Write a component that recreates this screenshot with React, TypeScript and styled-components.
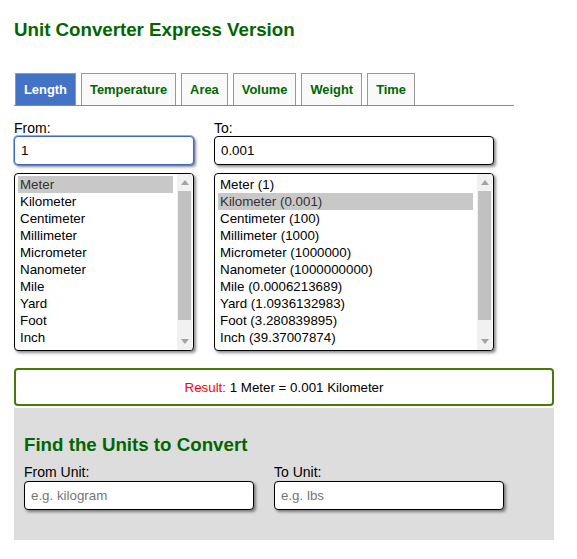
import React, { useState } from 'react';
import styled, { createGlobalStyle } from 'styled-components';

const GlobalStyle = createGlobalStyle`
  body {
    margin: 0;
    background: #fff;
    font-family: "Liberation Sans", Arial, sans-serif;
    color: #000;
  }
`;

const Page = styled.div`
  width: 540px;
  padding: 19px 0 0 14px;
`;

const Title = styled.h1`
  margin: 0;
  font-size: 18.72px;
  line-height: 22px;
  font-weight: bold;
  color: #006600;
`;

const TabBar = styled.div`
  display: flex;
  align-items: flex-end;
  gap: 5px;
  width: 499px;
  margin-top: 32px;
  padding-left: 1px;
  border-bottom: 1px solid #8a8a8a;
`;

const Tab = styled.button<{ $active?: boolean }>`
  box-sizing: border-box;
  height: 32px;
  padding: 0 8px;
  border: 1px solid #999;
  border-bottom: none;
  background: ${props => props.$active ? '#4472c4' : '#f9f9f9'};
  color: ${props => props.$active ? '#fff' : '#006600'};
  font-family: "Liberation Sans", Arial, sans-serif;
  font-size: 12.9px;
  font-weight: bold;
  cursor: pointer;
`;

const ConverterGrid = styled.div`
  display: grid;
  grid-template-columns: 180px 280px;
  column-gap: 20px;
  margin-top: 14px;
`;

const Column = styled.div`
  display: flex;
  flex-direction: column;
`;

const Label = styled.label`
  display: block;
  font-size: 14px;
  line-height: 16px;
  color: #000;
`;

const TextInput = styled.input`
  box-sizing: border-box;
  width: 100%;
  height: 29px;
  padding: 0 6px;
  border: 1px solid #000;
  border-radius: 4px;
  background: #fff;
  font-family: "Liberation Sans", Arial, sans-serif;
  font-size: 13.33px;
  color: #000;
  box-shadow: 2px 2px 3px rgba(0, 0, 0, 0.45);
  outline: none;

  &::placeholder {
    color: #767676;
  }

  &:focus {
    border-color: #3f68c0;
    box-shadow: 0 0 0 1px rgba(70, 110, 200, 0.55), 2px 2px 3px rgba(0, 0, 0, 0.45);
  }
`;

const ListBox = styled.div`
  box-sizing: border-box;
  display: flex;
  height: 178px;
  margin-top: 8px;
  border: 1px solid #000;
  border-radius: 4px;
  background: #fff;
  box-shadow: 2px 2px 3px rgba(0, 0, 0, 0.45);
  overflow: hidden;
`;

const Options = styled.div`
  flex: 1;
  padding: 2px 4px 0 3px;
  overflow: hidden;
`;

const Option = styled.div<{ $selected?: boolean }>`
  height: 17px;
  padding-left: 2px;
  font-size: 13.33px;
  line-height: 17px;
  white-space: nowrap;
  background: ${props => props.$selected ? '#c8c8c8' : 'transparent'};
  color: ${props => props.$selected ? '#333' : '#000'};
  cursor: default;
`;

const ScrollBar = styled.div`
  display: flex;
  flex-direction: column;
  width: 15px;
  margin-right: 1px;
  background: #f1f1f1;
`;

const ScrollArrow = styled.div`
  display: flex;
  align-items: center;
  justify-content: center;
  height: 17px;
`;

const ScrollTrack = styled.div`
  flex: 1;
  padding: 0 1px;
`;

const ScrollThumb = styled.div`
  height: 129px;
  background: #c1c1c1;
`;

const ResultBox = styled.div`
  box-sizing: border-box;
  display: flex;
  align-items: center;
  justify-content: center;
  height: 38px;
  margin-top: 17px;
  border: 2px solid #4a7a06;
  border-radius: 4px;
  font-size: 13.33px;
`;

const ResultLabel = styled.span`
  color: #ff0000;
`;

const FindSection = styled.div`
  box-sizing: border-box;
  height: 132px;
  margin-top: 2px;
  padding: 26px 10px 30px;
  background: #dddddd;
`;

const SectionHeading = styled.h2`
  margin: 0;
  font-size: 18.72px;
  line-height: 22px;
  font-weight: bold;
  color: #006600;
`;

const FindGrid = styled.div`
  display: grid;
  grid-template-columns: 230px 230px;
  column-gap: 20px;
  margin-top: 8px;
`;

const FieldGap = styled.div`
  height: 1px;
`;

const tabs = ['Length', 'Temperature', 'Area', 'Volume', 'Weight', 'Time'];

const units = [
  { name: 'Meter', value: '1' },
  { name: 'Kilometer', value: '0.001' },
  { name: 'Centimeter', value: '100' },
  { name: 'Millimeter', value: '1000' },
  { name: 'Micrometer', value: '1000000' },
  { name: 'Nanometer', value: '1000000000' },
  { name: 'Mile', value: '0.0006213689' },
  { name: 'Yard', value: '1.0936132983' },
  { name: 'Foot', value: '3.280839895' },
  { name: 'Inch', value: '39.37007874' },
  { name: 'Light Year', value: '1.0570008340e-16' },
];

const Arrow = ({ up }: { up?: boolean }) => (
  <svg width="8" height="5" viewBox="0 0 8 5">
    <path d={up ? 'M0 5 L4 0 L8 5 Z' : 'M0 0 L4 5 L8 0 Z'} fill="#a3a3a3" />
  </svg>
);

const FakeScrollBar = () => (
  <ScrollBar>
    <ScrollArrow><Arrow up /></ScrollArrow>
    <ScrollTrack>
      <ScrollThumb />
    </ScrollTrack>
    <ScrollArrow><Arrow /></ScrollArrow>
  </ScrollBar>
);

const App: React.FC = () => {
  const [activeTab, setActiveTab] = useState('Length');
  const [amount, setAmount] = useState('1');
  const [fromUnit, setFromUnit] = useState(0);
  const [toUnit, setToUnit] = useState(1);

  const result = '0.001';

  return (
    <>
      <GlobalStyle />
      <Page>
        <Title>Unit Converter Express Version</Title>

        <TabBar>
          {tabs.map(tab => (
            <Tab
              key={tab}
              $active={tab === activeTab}
              onClick={() => setActiveTab(tab)}
            >
              {tab}
            </Tab>
          ))}
        </TabBar>

        <ConverterGrid>
          <Column>
            <Label>From:</Label>
            <TextInput
              autoFocus
              value={amount}
              onChange={e => setAmount(e.target.value)}
            />
            <ListBox>
              <Options>
                {units.map((u, i) => (
                  <Option
                    key={u.name}
                    $selected={i === fromUnit}
                    onClick={() => setFromUnit(i)}
                  >
                    {u.name}
                  </Option>
                ))}
              </Options>
              <FakeScrollBar />
            </ListBox>
          </Column>

          <Column>
            <Label>To:</Label>
            <TextInput value={result} readOnly />
            <ListBox>
              <Options>
                {units.map((u, i) => (
                  <Option
                    key={u.name}
                    $selected={i === toUnit}
                    onClick={() => setToUnit(i)}
                  >
                    {u.name} ({u.value})
                  </Option>
                ))}
              </Options>
              <FakeScrollBar />
            </ListBox>
          </Column>
        </ConverterGrid>

        <ResultBox>
          <ResultLabel>Result:</ResultLabel>&nbsp;{amount} {units[fromUnit].name} = {result} {units[toUnit].name}
        </ResultBox>

        <FindSection>
          <SectionHeading>Find the Units to Convert</SectionHeading>
          <FindGrid>
            <Column>
              <Label>From Unit:</Label>
              <FieldGap />
              <TextInput placeholder="e.g. kilogram" />
            </Column>
            <Column>
              <Label>To Unit:</Label>
              <FieldGap />
              <TextInput placeholder="e.g. lbs" />
            </Column>
          </FindGrid>
        </FindSection>
      </Page>
    </>
  );
};

export default App;
